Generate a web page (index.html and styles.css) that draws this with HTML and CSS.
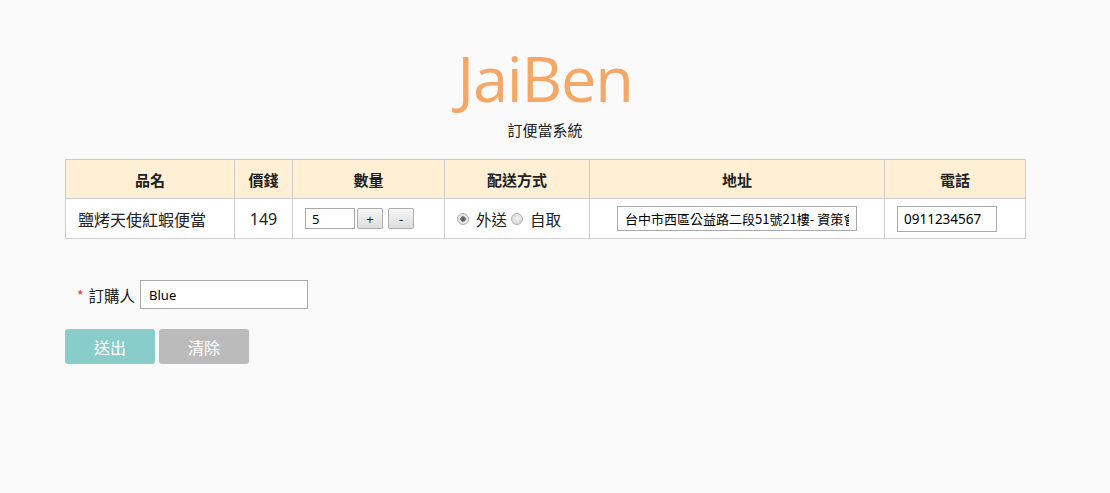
FILE: index.html
```html
<!DOCTYPE html>
<html lang="zh-Hant">
<head>
<meta charset="utf-8">
<title>JaiBen 訂便當系統</title>
<link rel="stylesheet" href="styles.css">
</head>
<body>
<div class="page">
  <header class="brand">
    <h1 class="logo">JaiBen</h1>
    <p class="subtitle">訂便當系統</p>
  </header>
  <table class="orders">
    <colgroup>
      <col class="c-name"><col class="c-price"><col class="c-qty"><col class="c-ship"><col class="c-addr"><col class="c-tel">
    </colgroup>
    <thead>
      <tr><th>品名</th><th>價錢</th><th>數量</th><th>配送方式</th><th>地址</th><th>電話</th></tr>
    </thead>
    <tbody>
      <tr>
        <td class="left">鹽烤天使紅蝦便當</td>
        <td>149</td>
        <td class="left"><span class="qty"><input class="qty-in" type="text" value="5"><button class="step">+</button><button class="step step-minus">-</button></span></td>
        <td class="left"><label class="opt"><input class="radio" type="radio" name="ship" checked>外送</label><label class="opt"><input class="radio" type="radio" name="ship">自取</label></td>
        <td><input class="addr" type="text" value="台中市西區公益路二段51號21樓- 資策會"></td>
        <td class="left"><input class="tel" type="text" value="0911234567"></td>
      </tr>
    </tbody>
  </table>
  <div class="buyer">
    <span class="req">*</span><span class="buyer-label">訂購人</span><input class="buyer-in" type="text" value="Blue">
  </div>
  <div class="actions">
    <button class="btn btn-send">送出</button><button class="btn btn-clear">清除</button>
  </div>
</div>
</body>
</html>
```
FILE: styles.css
```css
html, body {
  margin: 0;
  padding: 0;
  background: #fafafa;
}
body {
  font-family: "Noto Sans", "Noto Sans CJK TC", sans-serif;
  color: #222;
}
.page {
  width: 960px;
  margin-left: 65px;
  padding-top: 38px;
}
.brand {
  text-align: center;
}
.logo {
  margin: 0;
  font-family: "Open Sans", "Noto Sans", sans-serif;
  font-weight: 400;
  font-size: 63px;
  line-height: 80px;
  color: #f4a766;
  letter-spacing: -1.2px;
}
.subtitle {
  margin: 0;
  font-size: 15px;
  line-height: 22px;
  padding-top: 1px;
  font-family: "Noto Sans CJK TC", sans-serif;
}
.orders {
  margin-top: 18px;
  width: 960px;
  border-collapse: collapse;
  table-layout: fixed;
  font-family: "Noto Sans", "Noto Sans CJK TC", sans-serif;
}
.c-name { width: 169px; }
.c-price { width: 58px; }
.c-qty { width: 152px; }
.c-ship { width: 145px; }
.c-addr { width: 295px; }
.c-tel { width: 141px; }
.orders th, .orders td {
  border: 1px solid #cccccc;
  text-align: center;
  padding: 0 12px;
  white-space: nowrap;
  overflow: hidden;
}
.orders th {
  background: #ffefd5;
  height: 38px;
  font-size: 15px;
  font-weight: 600;
  font-family: "Noto Sans CJK TC", sans-serif;
}
.orders td {
  height: 39px;
  font-size: 16px;
  background: #ffffff;
}
.orders td.left {
  text-align: left;
}
.qty {
  display: flex;
  align-items: center;
}
.qty-in {
  width: 50px;
  height: 21px;
  box-sizing: border-box;
  border: 1px solid #a9a9a9;
  padding: 0 6px;
  font-size: 13px;
  font-family: "Noto Sans", sans-serif;
  margin: 0;
}
.step {
  width: 26px;
  height: 21px;
  box-sizing: border-box;
  margin: 0 0 0 2px;
  padding: 0;
  border: 1px solid #adadad;
  border-radius: 2px;
  background: linear-gradient(#f6f6f6, #dddddd);
  font-size: 13px;
  line-height: 18px;
  color: #222;
  font-family: "Noto Sans", sans-serif;
}
.step-minus {
  margin-left: 5px;
}
.opt {
  display: inline-flex;
  align-items: center;
  font-size: 15.5px;
  font-family: "Noto Sans CJK TC", sans-serif;
}
.radio {
  appearance: none;
  -webkit-appearance: none;
  box-sizing: border-box;
  width: 12px;
  height: 12px;
  margin: 0 7px 0 0;
  border-radius: 50%;
  border: 1px solid #b4b4b4;
  background: radial-gradient(circle at 50% 40%, #f0f0f0 0, #d2d2d2 100%);
}
.radio:checked {
  background: radial-gradient(circle, #5a5a5a 0, #6a6a6a 2.4px, #e6e6e6 3px, #d9d9d9 100%);
}
.opt + .opt .radio {
  margin-left: 4px;
}
.addr {
  width: 240px;
  height: 25px;
  box-sizing: border-box;
  border: 1px solid #a9a9a9;
  padding: 0 7px;
  font-size: 13px;
  font-family: "Noto Sans CJK TC", sans-serif;
  margin: 0;
  vertical-align: middle;
}
.tel {
  width: 100px;
  height: 26px;
  box-sizing: border-box;
  border: 1px solid #a9a9a9;
  padding: 0 6px;
  font-size: 13.5px;
  font-family: "Noto Sans", sans-serif;
  margin: 0;
  vertical-align: middle;
}
.buyer {
  display: flex;
  align-items: center;
  margin-top: 41px;
  padding-left: 12px;
  font-family: "Noto Sans CJK TC", sans-serif;
  font-size: 15.5px;
}
.req {
  color: #e53935;
  margin-right: 5px;
  font-size: 14px;
}
.buyer-label {
  margin-right: 5px;
}
.buyer-in {
  width: 168px;
  height: 29px;
  box-sizing: border-box;
  border: 1px solid #a9a9a9;
  padding: 0 8px;
  font-size: 13px;
  font-family: "Noto Sans", sans-serif;
  margin: 0;
}
.actions {
  display: flex;
  gap: 4px;
  margin-top: 20px;
}
.btn {
  width: 90px;
  height: 35px;
  border: none;
  border-radius: 3px;
  color: #ffffff;
  font-size: 16px;
  font-family: "Noto Sans CJK TC", sans-serif;
  padding: 0;
}
.btn-send {
  background: #88cdc9;
}
.btn-clear {
  background: #bbbbbb;
}
```
